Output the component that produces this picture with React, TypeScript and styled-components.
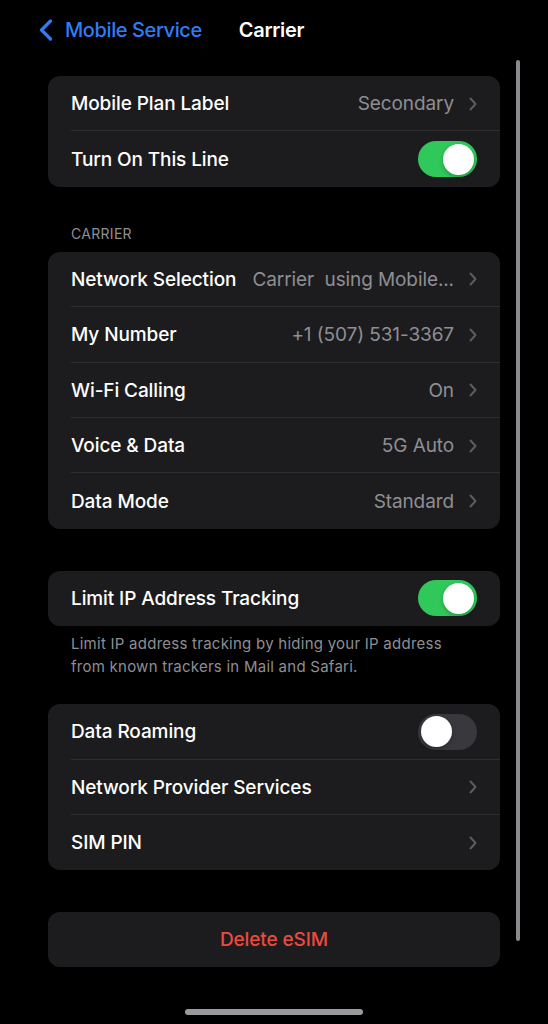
import React from "react";
import styled, { createGlobalStyle } from "styled-components";

const GlobalStyle = createGlobalStyle`
	html, body {
		margin: 0;
		padding: 0;
		background: #000;
	}
	body {
		font-family: Inter, "Noto Sans", "Liberation Sans", sans-serif;
		-webkit-font-smoothing: antialiased;
	}
`;

const Screen = styled.div`
	position: relative;
	width: 548px;
	height: 1024px;
	background: #000;
	color: #fff;
	overflow: hidden;
	display: flex;
	flex-direction: column;
`;

const NavBar = styled.header`
	height: 60px;
	display: flex;
	align-items: center;
	padding-left: 38px;
`;

const BackButton = styled.a`
	display: flex;
	align-items: center;
	gap: 11px;
	color: #2f7df6;
	font-size: 20px;
	font-weight: 500;
	letter-spacing: -0.4px;
`;

const NavTitle = styled.h1`
	margin: 0 0 0 37px;
	font-size: 20px;
	font-weight: 600;
	letter-spacing: -0.3px;
`;

const Content = styled.main`
	display: flex;
	flex-direction: column;
	padding: 16px 48px 0;
`;

const Group = styled.section<{ $gap?: number }>`
	background: #1c1c1e;
	border-radius: 12px;
	overflow: hidden;
	margin-top: ${(p) => p.$gap ?? 0}px;
`;

const Row = styled.div`
	position: relative;
	height: 55.4px;
	display: flex;
	align-items: center;
	padding: 0 23px;
	gap: 8px;

	&:not(:last-child)::after {
		content: "";
		position: absolute;
		left: 23px;
		right: 0;
		bottom: 0;
		height: 1px;
		background: #2e2e31;
	}
`;

const Label = styled.span`
	font-size: 19px;
	font-weight: 500;
	letter-spacing: -0.1px;
	white-space: nowrap;
	flex-shrink: 0;
`;

const Value = styled.span`
	margin-left: auto;
	font-size: 19px;
	color: #8e8e93;
	letter-spacing: -0.1px;
	white-space: pre;
	overflow: hidden;
	text-overflow: ellipsis;
`;

const Chevron = styled.svg<{ $alone?: boolean }>`
	flex-shrink: 0;
	margin-left: ${(p) => (p.$alone ? "auto" : "7px")};
	width: 8px;
	height: 14px;
`;

const SwitchTrack = styled.div<{ $on: boolean }>`
	margin-left: auto;
	width: 59px;
	height: 36px;
	border-radius: 18px;
	background: ${(p) => (p.$on ? "#30c85a" : "#39393d")};
	display: flex;
	align-items: center;
	justify-content: ${(p) => (p.$on ? "flex-end" : "flex-start")};
	padding: 0 3px;
	box-sizing: border-box;
`;

const SwitchKnob = styled.div`
	width: 31px;
	height: 31px;
	border-radius: 50%;
	background: #fff;
	box-shadow: 0 2px 4px rgba(0, 0, 0, 0.25);
`;

const SectionHeader = styled.div`
	margin: 39px 0 10px 23px;
	font-size: 14px;
	color: #8e8e93;
	letter-spacing: 0.3px;
	line-height: 16px;
`;

const Footnote = styled.p`
	margin: 6px 40px 0 23px;
	font-size: 15px;
	line-height: 23px;
	letter-spacing: 0.25px;
	color: #8e8e93;
`;

const DestructiveButton = styled.button`
	width: 100%;
	height: 55px;
	border: 0;
	background: transparent;
	color: #eb4a3f;
	font-family: inherit;
	font-size: 19px;
	font-weight: 500;
	letter-spacing: -0.1px;
`;

const ScrollIndicator = styled.div`
	position: absolute;
	left: 516px;
	top: 60px;
	width: 4px;
	height: 881px;
	border-radius: 2px;
	background: #8a8a8e;
`;

const HomeIndicator = styled.div`
	position: absolute;
	left: 185px;
	bottom: 9px;
	width: 178px;
	height: 6px;
	border-radius: 3px;
	background: #9a9a9e;
`;

const ChevronIcon = ({ alone }: { alone?: boolean }) => (
	<Chevron $alone={alone} viewBox="0 0 8 14">
		<path
			d="M1.5 1.5 L6.5 7 L1.5 12.5"
			fill="none"
			stroke="#5b5b60"
			strokeWidth="2"
			strokeLinecap="round"
			strokeLinejoin="round"
		/>
	</Chevron>
);

const Switch = ({ on }: { on: boolean }) => (
	<SwitchTrack $on={on}>
		<SwitchKnob />
	</SwitchTrack>
);

type LinkRowProps = { label: string; value?: string };

const LinkRow = ({ label, value }: LinkRowProps) => (
	<Row>
		<Label>{label}</Label>
		{value && <Value>{value}</Value>}
		<ChevronIcon alone={!value} />
	</Row>
);

const ToggleRow = ({ label, on }: { label: string; on: boolean }) => (
	<Row>
		<Label>{label}</Label>
		<Switch on={on} />
	</Row>
);

const carrierRows = [
	{ label: "Network Selection", value: "Carrier  using Mobile..." },
	{ label: "My Number", value: "+1 (507) 531-3367" },
	{ label: "Wi-Fi Calling", value: "On" },
	{ label: "Voice & Data", value: "5G Auto" },
	{ label: "Data Mode", value: "Standard" },
];

export default function App() {
	return (
		<Screen>
			<GlobalStyle />
			<NavBar>
				<BackButton>
					<svg width="16" height="22" viewBox="0 0 16 22">
						<path
							d="M12.5 2 L3.5 11 L12.5 20"
							fill="none"
							stroke="#2f7df6"
							strokeWidth="3.2"
							strokeLinecap="round"
							strokeLinejoin="round"
						/>
					</svg>
					Mobile Service
				</BackButton>
				<NavTitle>Carrier</NavTitle>
			</NavBar>

			<Content>
				<Group>
					<LinkRow label="Mobile Plan Label" value="Secondary" />
					<ToggleRow label="Turn On This Line" on />
				</Group>

				<SectionHeader>CARRIER</SectionHeader>
				<Group>
					{carrierRows.map((r) => (
						<LinkRow key={r.label} label={r.label} value={r.value} />
					))}
				</Group>

				<Group $gap={42}>
					<ToggleRow label="Limit IP Address Tracking" on />
				</Group>
				<Footnote>
					Limit IP address tracking by hiding your IP address from known
					trackers in Mail and Safari.
				</Footnote>

				<Group $gap={26}>
					<ToggleRow label="Data Roaming" on={false} />
					<LinkRow label="Network Provider Services" />
					<LinkRow label="SIM PIN" />
				</Group>

				<Group $gap={42}>
					<DestructiveButton>Delete eSIM</DestructiveButton>
				</Group>
			</Content>

			<ScrollIndicator />
			<HomeIndicator />
		</Screen>
	);
}
